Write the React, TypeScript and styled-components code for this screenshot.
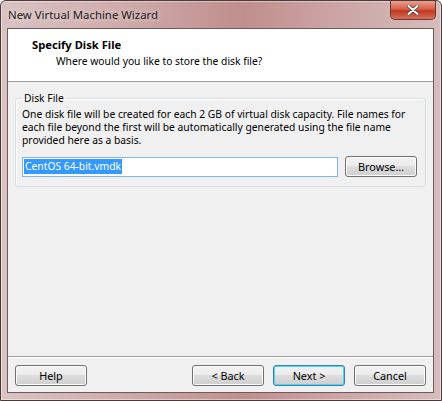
import styled, { createGlobalStyle } from "styled-components";

const GlobalStyle = createGlobalStyle`
  html, body {
    margin: 0;
    padding: 0;
    background: #ffffff;
  }
  body {
    font-family: "Noto Sans", "DejaVu Sans", sans-serif;
  }
`;

const Window = styled.div`
  width: 442px;
  height: 401px;
  box-sizing: border-box;
  border: 1px solid #4e3838;
  border-radius: 6px 6px 0 0;
  background: linear-gradient(
    90deg,
    #d9c3c3 0%,
    #d0adad 25%,
    #c08e8e 55%,
    #cda6a6 78%,
    #d6bcbc 100%
  );
  box-shadow: inset 0 0 0 1px rgba(255, 255, 255, 0.45);
  display: flex;
  flex-direction: column;
  overflow: hidden;
`;

const TitleBar = styled.div`
  height: 27px;
  display: flex;
  align-items: flex-start;
  padding-left: 7px;
  padding-right: 5px;
  flex-shrink: 0;
`;

const TitleText = styled.div`
  font-size: 11.4px;
  color: #1a1a1a;
  padding-top: 6px;
  text-shadow: 0 0 6px rgba(255, 255, 255, 0.8);
`;

const CloseButton = styled.div`
  margin-left: auto;
  width: 46px;
  height: 19px;
  box-sizing: border-box;
  border: 1px solid #6a3a30;
  border-top: none;
  border-radius: 0 0 5px 5px;
  background: linear-gradient(180deg, #e9a08e 0%, #d6604a 45%, #c2371f 55%, #d8705a 100%);
  display: flex;
  align-items: center;
  justify-content: center;
`;

const Client = styled.div`
  flex: 1;
  margin: 0 7px 7px 6px;
  border: 1px solid #6f5a5a;
  background: #f0f0f0;
  display: flex;
  flex-direction: column;
  font-size: 10.3px;
  color: #000;
`;

const Header = styled.div`
  height: 53px;
  background: #ffffff;
  border-bottom: 1px solid #a0a0a0;
  padding: 8px 0 0 24px;
  box-sizing: border-box;
  flex-shrink: 0;
`;

const HeaderTitle = styled.div`
  font-weight: 700;
  font-size: 11.2px;
  line-height: 15px;
`;

const HeaderSub = styled.div`
  padding-left: 24px;
  line-height: 15px;
  margin-top: 2px;
`;

const Body = styled.div`
  flex: 1;
  padding: 9px 7px 0 7px;
`;

const Group = styled.fieldset`
  margin: 0;
  border: 1px solid #d5dfe5;
  border-radius: 3px;
  padding: 3px 8px 9px 6px;
  box-shadow: inset 1px 1px 0 #ffffff;
`;

const Legend = styled.legend`
  padding: 0 2px;
  margin-left: 0;
  line-height: 14px;
`;

const Description = styled.div`
  line-height: 13px;
`;

const FileRow = styled.div`
  display: flex;
  align-items: center;
  gap: 7px;
  margin-top: 9px;
`;

const FileInput = styled.div`
  flex: 1;
  height: 20px;
  box-sizing: border-box;
  border: 1px solid #7eb4ea;
  background: #ffffff;
  display: flex;
  align-items: center;
  padding-left: 1px;
`;

const Selection = styled.span`
  background: #3399ff;
  color: #ffffff;
  line-height: 15px;
  padding: 0 1px;
`;

const Button = styled.div<{ $primary?: boolean }>`
  width: 72px;
  height: 21px;
  box-sizing: border-box;
  border: 1px solid ${(p) => (p.$primary ? "#3c7fb1" : "#707070")};
  border-radius: 3px;
  background: linear-gradient(180deg, #f2f2f2 0%, #ebebeb 49%, #dddddd 50%, #cfcfcf 100%);
  box-shadow: inset 0 0 0 1px ${(p) => (p.$primary ? "#48d8fb" : "#fcfcfc")};
  display: flex;
  align-items: center;
  justify-content: center;
  font-size: 10.8px;
  flex-shrink: 0;
`;

const Separator = styled.div`
  height: 1px;
  background: #a0a0a0;
  border-bottom: 1px solid #ffffff;
`;

const Footer = styled.div`
  height: 34px;
  display: flex;
  align-items: center;
  padding: 0 7px 0 7px;
  gap: 9px;
`;

const Spacer = styled.div`
  flex: 1;
`;

export default function App() {
  return (
    <>
      <GlobalStyle />
      <Window>
        <TitleBar>
          <TitleText>New Virtual Machine Wizard</TitleText>
          <CloseButton>
            <svg width="12" height="10" viewBox="0 0 12 10">
              <path
                d="M1.5 1 L10.5 9 M10.5 1 L1.5 9"
                stroke="#3a3a3a"
                strokeWidth="3.4"
                strokeLinecap="round"
              />
              <path
                d="M1.5 1 L10.5 9 M10.5 1 L1.5 9"
                stroke="#ffffff"
                strokeWidth="2"
                strokeLinecap="round"
              />
            </svg>
          </CloseButton>
        </TitleBar>
        <Client>
          <Header>
            <HeaderTitle>Specify Disk File</HeaderTitle>
            <HeaderSub>Where would you like to store the disk file?</HeaderSub>
          </Header>
          <Body>
            <Group>
              <Legend>Disk File</Legend>
              <Description>
                One disk file will be created for each 2 GB of virtual disk capacity. File names for
                <br />
                each file beyond the first will be automatically generated using the file name
                <br />
                provided here as a basis.
              </Description>
              <FileRow>
                <FileInput>
                  <Selection>CentOS 64-bit.vmdk</Selection>
                </FileInput>
                <Button>Browse…</Button>
              </FileRow>
            </Group>
          </Body>
          <Separator />
          <Footer>
            <Button>Help</Button>
            <Spacer />
            <Button>&lt; Back</Button>
            <Button $primary>Next &gt;</Button>
            <Button>Cancel</Button>
          </Footer>
        </Client>
      </Window>
    </>
  );
}
